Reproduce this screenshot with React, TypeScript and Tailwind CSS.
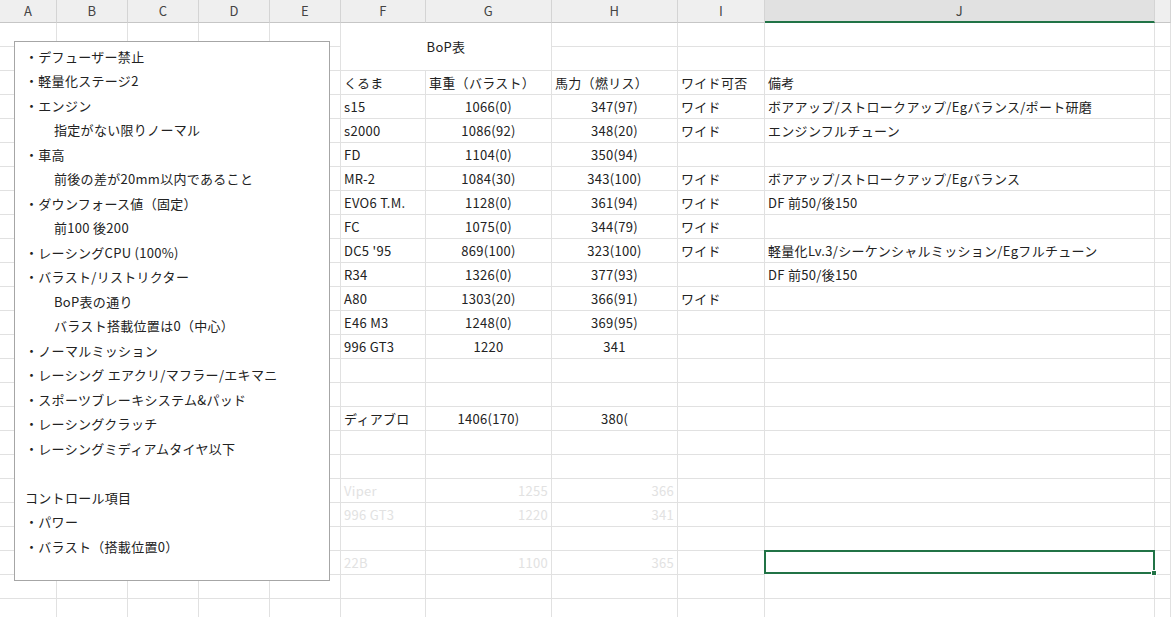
const COLS = ["A", "B", "C", "D", "E", "F", "G", "H", "I", "J", ""];

type Row = { f?: string; g?: string; h?: string; i?: string; j?: string; faded?: boolean };

const rows: Row[] = [
  {},
  {},
  { f: "くるま", g: "車重（バラスト）", h: "馬力（燃リス）", i: "ワイド可否", j: "備考" },
  { f: "s15", g: "1066(0)", h: "347(97)", i: "ワイド", j: "ボアアップ/ストロークアップ/Egバランス/ポート研磨" },
  { f: "s2000", g: "1086(92)", h: "348(20)", i: "ワイド", j: "エンジンフルチューン" },
  { f: "FD", g: "1104(0)", h: "350(94)" },
  { f: "MR-2", g: "1084(30)", h: "343(100)", i: "ワイド", j: "ボアアップ/ストロークアップ/Egバランス" },
  { f: "EVO6 T.M.", g: "1128(0)", h: "361(94)", i: "ワイド", j: "DF 前50/後150" },
  { f: "FC", g: "1075(0)", h: "344(79)", i: "ワイド" },
  { f: "DC5 '95", g: "869(100)", h: "323(100)", i: "ワイド", j: "軽量化Lv.3/シーケンシャルミッション/Egフルチューン" },
  { f: "R34", g: "1326(0)", h: "377(93)", j: "DF 前50/後150" },
  { f: "A80", g: "1303(20)", h: "366(91)", i: "ワイド" },
  { f: "E46 M3", g: "1248(0)", h: "369(95)" },
  { f: "996 GT3", g: "1220", h: "341" },
  {},
  {},
  { f: "ディアブロ", g: "1406(170)", h: "380(" },
  {},
  {},
  { f: "Viper", g: "1255", h: "366", faded: true },
  { f: "996 GT3", g: "1220", h: "341", faded: true },
  {},
  { f: "22B", g: "1100", h: "365", faded: true },
  {},
  {},
];

const notes: { t: string; indent?: boolean }[] = [
  { t: "・デフューザー禁止" },
  { t: "・軽量化ステージ2" },
  { t: "・エンジン" },
  { t: "指定がない限りノーマル", indent: true },
  { t: "・車高" },
  { t: "前後の差が20mm以内であること", indent: true },
  { t: "・ダウンフォース値（固定）" },
  { t: "前100 後200", indent: true },
  { t: "・レーシングCPU (100%)" },
  { t: "・バラスト/リストリクター" },
  { t: "BoP表の通り", indent: true },
  { t: "バラスト搭載位置は0（中心）", indent: true },
  { t: "・ノーマルミッション" },
  { t: "・レーシング エアクリ/マフラー/エキマニ" },
  { t: "・スポーツブレーキシステム&パッド" },
  { t: "・レーシングクラッチ" },
  { t: "・レーシングミディアムタイヤ以下" },
  { t: "" },
  { t: "コントロール項目" },
  { t: "・パワー" },
  { t: "・バラスト（搭載位置0）" },
];

const cell = "border-r border-b border-[#e1e1e1] h-6 px-[3px] flex items-center whitespace-nowrap overflow-visible";

export default function App() {
  return (
    <div
      className="relative w-[1171px] h-[617px] overflow-hidden bg-white text-[13px] text-[#222] tracking-[0.3px]"
      style={{ fontFamily: '"Noto Sans CJK JP", "Noto Sans", sans-serif' }}
    >
      <div className="grid grid-cols-[57px_71px_71px_71px_71px_85px_126px_126px_87px_390px_16px]">
        {COLS.map((c) => (
          <div
            key={c || "k"}
            className={`h-[23px] flex items-center justify-center text-[13px] text-[#444] border-r border-[#d4d4d4] ${
              c === "J"
                ? "bg-[#e1e1e1] border-b-2 border-b-[#217346]"
                : "bg-[#efefef] border-b border-b-[#c6c6c6]"
            }`}
          >
            {c}
          </div>
        ))}
        {rows.map((r, idx) => {
          const fade = r.faded ? "text-[#e2e2e2]" : "";
          const align = r.faded ? "justify-end" : idx === 2 ? "" : "justify-center";
          const out = [
            ...["a", "b", "c", "d", "e"].map((k) => <div key={idx + k} className={cell} />),
          ];
          if (idx === 0) {
            out.push(
              <div
                key="bop"
                className="col-span-2 row-span-2 border-r border-b border-[#e1e1e1] flex items-center justify-center"
              >
                BoP表
              </div>
            );
          } else if (idx !== 1) {
            out.push(<div key={idx + "f"} className={`${cell} ${fade}`}>{r.f}</div>);
            out.push(<div key={idx + "g"} className={`${cell} ${fade} ${align}`}>{r.g}</div>);
          }
          out.push(<div key={idx + "h"} className={`${cell} ${fade} ${align}`}>{r.h}</div>);
          out.push(<div key={idx + "i"} className={cell}>{r.i}</div>);
          out.push(
            <div
              key={idx + "j"}
              className={idx === 22 ? "relative h-6 border-2 border-[#217346] -mt-px -ml-px" : cell}
            >
              {r.j}
              {idx === 22 && (
                <span className="absolute -right-[4px] -bottom-[4px] w-[6px] h-[6px] bg-[#217346] border border-white" />
              )}
            </div>
          );
          out.push(<div key={idx + "k"} className={cell} />);
          return out;
        })}
      </div>

      <div className="absolute left-[14px] top-[41px] w-[316px] h-[540px] bg-white border border-[#a6a6a6] pt-[2px] pl-[10px]">
        {notes.map((n, i) => (
          <div key={i} className={`h-[24.5px] flex items-center ${n.indent ? "pl-[29px]" : ""}`}>
            {n.t}
          </div>
        ))}
      </div>
    </div>
  );
}
